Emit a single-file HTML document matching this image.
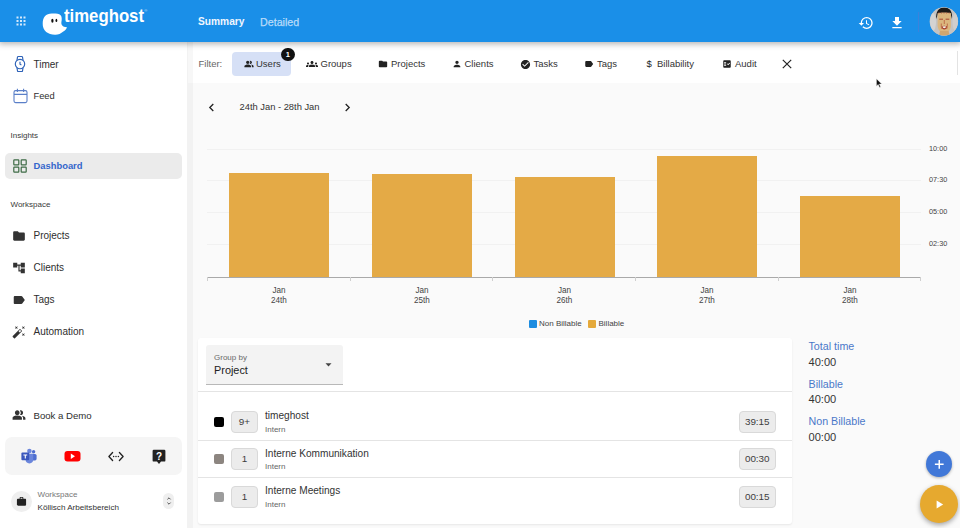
<!DOCTYPE html>
<html>
<head>
<meta charset="utf-8">
<title>timeghost</title>
<style>
*{box-sizing:border-box;margin:0;padding:0}
html,body{width:960px;height:528px;overflow:hidden;background:#fafafa;font-family:"Liberation Sans",sans-serif;color:#2b2b2b}
.abs{position:absolute}
#hdr{position:absolute;left:0;top:0;width:960px;height:42px;background:#1a8fe8;box-shadow:0 1px 6px 1px rgba(0,0,0,.3);z-index:5}
#side{position:absolute;left:0;top:42px;width:187px;height:486px;background:#fff;z-index:2}
#fbar{position:absolute;left:188px;top:42px;width:772px;height:41px;background:#fff;z-index:1}
.t{position:absolute;white-space:nowrap;line-height:1}
.nav{font-size:10px;color:#2e2e2e}
.sec{font-size:8px;color:#3a3a3a}
.chip{font-size:9.5px;color:#333}
.ax{font-size:8.15px;color:#444}
.bar{position:absolute;background:#e4aa46}
.grid{position:absolute;left:207px;width:714px;height:1px;background:#f1f1f1}
.row-t{font-size:10.1px;color:#333}
.row-s{font-size:8px;color:#666}
.badge{position:absolute;background:#ececec;border:1px solid #d9d9d9;border-radius:4px;font-size:9.9px;color:#3e3e3e;text-align:center}
.sq{position:absolute;width:10px;height:10px;border-radius:2px}
.sum-l{font-size:10.7px;color:#4a78c9}
.sum-v{font-size:11.1px;color:#353535}
</style>
</head>
<body>
<!-- HEADER -->
<div id="hdr">
  <svg class="abs" style="left:16px;top:16px" width="10" height="10" viewBox="0 0 10 10" fill="#d6eafb">
    <rect x="0.5" y="0.5" width="2" height="2"/><rect x="4" y="0.5" width="2" height="2"/><rect x="7.5" y="0.5" width="2" height="2"/>
    <rect x="0.5" y="4" width="2" height="2"/><rect x="4" y="4" width="2" height="2"/><rect x="7.5" y="4" width="2" height="2"/>
    <rect x="0.5" y="7.5" width="2" height="2"/><rect x="4" y="7.5" width="2" height="2"/><rect x="7.5" y="7.5" width="2" height="2"/>
  </svg>
  <!-- ghost logo -->
  <svg class="abs" style="left:40px;top:12px" width="30" height="24" viewBox="40 12 30 24">
    <path d="M51.7 13.5 C55.5 13.4 59 13.6 60.6 15.2 C62 16.6 61.9 19.5 61.4 22 C61 24.6 62.5 27.3 67 27.2 C66.5 29 65 30.6 63.3 31.4 C61 33.5 58 34.8 55 34.7 C51.5 34.7 48.3 33.6 46.2 32 C43.800 29.800 42.600 27 42.700 23.800 C42.700 20.500 43.300 18 44.900 16.300 C46.500 14.300 49 13.500 51.700 13.500 Z" fill="#fff"/>
    <ellipse cx="52.4" cy="20.7" rx="1.15" ry="2" fill="#111"/>
    <ellipse cx="56.4" cy="20.4" rx="0.9" ry="1.7" fill="#111"/>
  </svg>
  <div class="t" style="left:64px;top:6.7px;font-size:18.5px;font-weight:bold;color:#fff;transform-origin:0 0;transform:scaleX(0.905)">timeghost</div>
  <div class="t" style="left:144.3px;top:9px;font-size:4px;color:rgba(255,255,255,.75)">®</div>
  <div class="t" style="left:198px;top:16.5px;font-size:10.2px;font-weight:bold;color:#f1f6fe">Summary</div>
  <div class="t" style="left:260px;top:16.5px;font-size:10.7px;color:#b9dbf9;-webkit-text-stroke:0.25px #b9dbf9">Detailed</div>
  <!-- history icon -->
  <svg class="abs" style="left:858px;top:14.5px" width="16" height="16" viewBox="0 0 24 24" fill="#fff">
    <path d="M13 3a9 9 0 0 0-9 9H1l3.89 3.89.07.14L9 12H6c0-3.87 3.13-7 7-7s7 3.13 7 7-3.13 7-7 7c-1.93 0-3.68-.79-4.94-2.06l-1.42 1.42A8.954 8.954 0 0 0 13 21a9 9 0 0 0 0-18zm-1 5v5l4.28 2.54.72-1.21-3.5-2.08V8H12z"/>
  </svg>
  <!-- download icon -->
  <svg class="abs" style="left:889px;top:14.5px" width="16" height="16" viewBox="0 0 24 24" fill="#fff">
    <path d="M19 9h-4V3H9v6H5l7 7 7-7zM5 18v2h14v-2H5z"/>
  </svg>
  <div class="abs" style="left:918px;top:12px;width:1px;height:20px;background:#3a82dc"></div>
  <!-- avatar -->
  <svg class="abs" style="left:929px;top:7px" width="30" height="30" viewBox="929 7 30 30">
    <defs><clipPath id="avc"><circle cx="943.9" cy="21.5" r="14"/></clipPath></defs>
    <circle cx="943.9" cy="21.5" r="14.2" fill="#c6c6c6"/>
    <g clip-path="url(#avc)">
      <rect x="929" y="7" width="30" height="30" fill="#c4c3c2"/>
      <ellipse cx="933" cy="22" rx="3" ry="9" fill="#d4d3d2"/>
      <ellipse cx="955.5" cy="22" rx="3" ry="9" fill="#cfcecd"/>
      <path d="M936.3 19 C935.6 12 938.5 7.6 944.2 7.6 C950 7.600 952.800 12 952 19 L950.600 13.600 H938 Z" fill="#1d1a18"/>
      <path d="M937.600 13.400 C937.600 12.200 950.900 12.200 950.900 13.400 V25.500 C950.900 29.500 948 33 944.300 33 C940.600 33 937.600 29.500 937.600 25.500 Z" fill="#dbb67e"/>
      <path d="M940 31 H948.600 L950 37 H938.600 Z" fill="#cfa66f"/>
      <path d="M939.300 19.200 H943 M945.600 19.200 H949.300" stroke="#a5452e" stroke-width="1"/>
      <path d="M944.300 20 V24 M941.300 23.500 C941.300 26 941 27 942 29 M947.300 23.500 C947.300 26 947.600 27 946.600 29" stroke="#b65a3c" stroke-width="0.800" fill="none"/>
      <path d="M941.600 26.200 Q944.300 25.200 947 26.200 Q946.600 29.400 944.300 29.400 Q942 29.400 941.600 26.200 Z" fill="#a63e2c"/>
      <path d="M942.400 26.600 Q944.300 26 946.200 26.600 Q945.800 28.200 944.300 28.200 Q942.800 28.200 942.400 26.600 Z" fill="#f6f0e6"/>
      <path d="M938.300 13 H950.300" stroke="#a33" stroke-width="0.700" stroke-dasharray="1 1.600"/>
    </g>
  </svg>
</div>

<!-- SIDEBAR -->
<div id="side">
  <!-- coordinates inside are relative to top:42 -->
  <!-- Timer -->
  <svg class="abs" style="left:13px;top:13px" width="14" height="18" viewBox="0 0 14 18" fill="none" stroke="#2f63b8" stroke-width="1.15">
    <circle cx="7" cy="9" r="4.7"/><path d="M4 5.200 L4.500 2.200 Q4.600 1.500 5.300 1.500 H8.700 Q9.400 1.500 9.500 2.200 L10 5.200 M4 12.800 L4.500 15.800 Q4.600 16.500 5.300 16.500 H8.700 Q9.400 16.500 9.500 15.800 L10 12.800 M7 6.800 V9.200 L8.400 10"/>
  </svg>
  <div class="t nav" style="left:33.5px;top:17.5px">Timer</div>
  <!-- Feed -->
  <svg class="abs" style="left:12.5px;top:46px" width="15" height="16" viewBox="0 0 15 16" fill="none" stroke="#5a7fc8" stroke-width="1.1">
    <rect x="1" y="2.6" width="13" height="12" rx="1.6"/><path d="M1 6.4 H14 M4.4 0.8 V4 M10.6 0.8 V4"/>
  </svg>
  <div class="t nav" style="left:33.5px;top:49.5px;font-size:9.3px">Feed</div>

  <div class="t sec" style="left:10.5px;top:89.5px">Insights</div>
  <div class="abs" style="left:5px;top:111px;width:177px;height:26px;border-radius:5px;background:#ebebeb"></div>
  <svg class="abs" style="left:13px;top:117px" width="14" height="14" viewBox="0 0 14 14" fill="none" stroke="#3d6b45" stroke-width="1.2">
    <rect x="0.8" y="0.8" width="5" height="5" rx="0.6"/><rect x="8.2" y="0.8" width="5" height="5" rx="0.6"/><rect x="0.8" y="8.2" width="5" height="5" rx="0.6"/><rect x="8.2" y="8.2" width="5" height="5" rx="0.6"/>
  </svg>
  <div class="t" style="left:33.5px;top:119px;font-size:9.4px;font-weight:bold;color:#3366cc">Dashboard</div>

  <div class="t sec" style="left:10.5px;top:159px">Workspace</div>
  <!-- Projects -->
  <svg class="abs" style="left:12px;top:187px" width="14" height="14" viewBox="0 0 24 24" fill="#333"><path d="M10 4H4c-1.1 0-2 .9-2 2v12c0 1.1.9 2 2 2h16c1.1 0 2-.9 2-2V8c0-1.1-.9-2-2-2h-8l-2-2z"/></svg>
  <div class="t nav" style="left:33.5px;top:188.5px">Projects</div>
  <!-- Clients -->
  <svg class="abs" style="left:12px;top:219px" width="14" height="14" viewBox="0 0 24 24" fill="#333"><path d="M22 11V3h-7v3H9V3H2v8h7V8h2v10h4v3h7v-8h-7v3h-2V8h2v3z"/></svg>
  <div class="t nav" style="left:33.5px;top:220.5px">Clients</div>
  <!-- Tags -->
  <svg class="abs" style="left:12px;top:251px" width="14" height="14" viewBox="0 0 24 24" fill="#333"><path d="M17.63 5.84C17.27 5.33 16.67 5 16 5L5 5.01C3.9 5.01 3 5.9 3 7v10c0 1.1.9 1.99 2 1.99L16 19c.67 0 1.27-.33 1.63-.84L22 12l-4.37-6.16z"/></svg>
  <div class="t nav" style="left:33.5px;top:252.5px">Tags</div>
  <!-- Automation -->
  <svg class="abs" style="left:12px;top:283px" width="14" height="14" viewBox="0 0 24 24" fill="#333"><path d="M7.5 5.6L10 7 8.6 4.5 10 2 7.500 3.400 5 2l1.400 2.500L5 7zm12 9.800L17 14l1.400 2.500L17 19l2.500-1.400L22 19l-1.400-2.500L22 14zM22 2l-2.500 1.400L17 2l1.400 2.500L17 7l2.500-1.400L22 7l-1.400-2.500zm-7.630 5.290a.9959.996 0 0 0-1.410 0L1.290 18.960c-.39.39-.39 1.020 0 1.410l2.340 2.340c.39.39 1.020.39 1.410 0L16.700 11.050c.39-.39.39-1.020 0-1.410l-2.330-2.350zm-1.030 5.490l-2.120-2.120 2.440-2.440 2.120 2.120-2.440 2.440z"/></svg>
  <div class="t nav" style="left:33.5px;top:284.5px">Automation</div>

  <!-- Book a demo -->
  <svg class="abs" style="left:12px;top:366px" width="14" height="14" viewBox="0 0 24 24" fill="#333"><path d="M16.670 13.130C18.040 14.060 19 15.320 19 17v3h4v-3c0-2.180-3.570-3.470-6.330-3.870zM9 12c2.210 0 4-1.790 4-4s-1.790-4-4-4-4 1.790-4 4 1.790 4 4 4zm6 0c2.210 0 4-1.790 4-4s-1.790-4-4-4c-.47 0-.91.100-1.330.24a5.980 5.980 0 0 1 0 7.520c.42.140.86.240 1.330.240zm-6 1c-2.670 0-8 1.340-8 4v3h16v-3c0-2.660-5.330-4-8-4z"/></svg>
  <div class="t nav" style="left:33.5px;top:368.5px;font-size:9.6px">Book a Demo</div>

  <!-- Icon box -->
  <div class="abs" style="left:5px;top:395px;width:177px;height:38px;border-radius:7px;background:#f5f5f5"></div>
  <!-- Teams -->
  <svg class="abs" style="left:20.5px;top:406px" width="16" height="16" viewBox="0 0 16 16">
    <circle cx="12.6" cy="3.8" r="1.7" fill="#4f6fd0"/><rect x="9.6" y="6" width="6" height="6.4" rx="1.6" fill="#4f6fd0"/>
    <circle cx="8.4" cy="3" r="2.3" fill="#6b86dc"/><path d="M4.6 5.800 H12.200 V11.600 A3.800 3.800 0 0 1 4.600 11.600 Z" fill="#6b86dc"/>
    <rect x="0.4" y="4.400" width="7.8" height="7.800" rx="1" fill="#3a57bd"/>
    <path d="M2.400 6.400 H6.200 V7.400 H4.850 V10.600 H3.750 V7.400 H2.400 Z" fill="#fff"/>
  </svg>
  <!-- YouTube -->
  <svg class="abs" style="left:63.5px;top:407px" width="17" height="14" viewBox="0 0 17 14"><rect x="0.5" y="2" width="16" height="10.500" rx="3" fill="#f00"/><path d="M6.800 4.600 L11 7.250 L6.800 9.900 Z" fill="#fff"/></svg>
  <!-- <..> -->
  <svg class="abs" style="left:107.500px;top:407.500px" width="16" height="13" viewBox="0 0 16 13" fill="none" stroke="#222" stroke-width="1.300" stroke-linecap="round" stroke-linejoin="round"><path d="M4.600 2.500 L0.900 6.500 L4.600 10.500 M11.400 2.500 L15.100 6.500 L11.400 10.500"/><path d="M5.600 6.500 h0.010 M8 6.500 h0.010 M10.400 6.500 h0.010" stroke-width="1.500"/></svg>
  <!-- ? -->
  <svg class="abs" style="left:152px;top:406.700px" width="14" height="16" viewBox="0 0 14 16"><path d="M1.800 0.800 H12.200 A1.200 1.200 0 0 1 13.400 2 V11.400 A1.200 1.200 0 0 1 12.200 12.600 H9 L7 15 L5 12.600 H1.800 A1.200 1.200 0 0 1 0.600 11.400 V2 A1.200 1.200 0 0 1 1.800 0.800 Z" fill="#222"/><text x="7" y="10.600" font-family="Liberation Sans" font-size="10" font-weight="bold" fill="#fff" text-anchor="middle">?</text></svg>

  <!-- Workspace switcher -->
  <div class="abs" style="left:11px;top:449px;width:21px;height:21px;border-radius:50%;background:#efefef"></div>
  <svg class="abs" style="left:16px;top:454px" width="11" height="11" viewBox="0 0 24 24" fill="#222"><path d="M20 6h-4V4c0-1.110-.89-2-2-2h-4c-1.110 0-2 .89-2 2v2H4c-1.110 0-1.990.89-1.990 2L2 19c0 1.110.89 2 2 2h16c1.110 0 2-.89 2-2V8c0-1.110-.89-2-2-2zm-6 0h-4V4h4v2z"/></svg>
  <div class="t" style="left:37.500px;top:448.500px;font-size:8px;color:#777">Workspace</div>
  <div class="t" style="left:37.500px;top:461.500px;font-size:8.100px;color:#333">Köllisch Arbeitsbereich</div>
  <div class="abs" style="left:163px;top:451px;width:11px;height:16px;border-radius:5.500px;background:#efefef"></div>
  <svg class="abs" style="left:165.500px;top:454px" width="6" height="10" viewBox="0 0 6 10" fill="none" stroke="#444" stroke-width="0.900"><path d="M1.400 3.400 L3 1.800 L4.600 3.400 M1.400 6.600 L3 8.200 L4.600 6.600"/></svg>
</div>

<div class="abs" style="left:187px;top:42px;width:6px;height:486px;background:rgba(0,0,0,0.03);z-index:2"></div>
<!-- FILTER BAR -->
<div id="fbar">
  <div class="t chip" style="margin-top:-0.5px;left:10.500px;top:17.500px;color:#666">Filter:</div>
  <div class="abs" style="left:44.200px;top:9.800px;width:58.400px;height:24.200px;border-radius:4px;background:#d6e0f6"></div>
  <svg class="abs" style="margin-top:-0.5px;left:55.500px;top:17.500px" width="10" height="10" viewBox="0 0 24 24" fill="#222"><path d="M16.670 13.130C18.040 14.060 19 15.320 19 17v3h4v-3c0-2.180-3.570-3.470-6.330-3.870zM9 12c2.210 0 4-1.790 4-4s-1.790-4-4-4-4 1.790-4 4 1.790 4 4 4zm6 0c2.210 0 4-1.790 4-4s-1.790-4-4-4c-.47 0-.91.100-1.330.24a5.980 5.980 0 0 1 0 7.520c.42.140.86.240 1.330.240zm-6 1c-2.670 0-8 1.340-8 4v3h16v-3c0-2.660-5.330-4-8-4z"/></svg>
  <div class="t chip" style="margin-top:-0.5px;left:68px;top:17.500px">Users</div>
  <div class="abs" style="left:93px;top:5.500px;width:13.500px;height:13.500px;border-radius:50%;background:#111;color:#fff;font-size:7.500px;font-weight:bold;text-align:center;line-height:13.500px">1</div>

  <svg class="abs" style="margin-top:-0.5px;left:118px;top:16.500px" width="12" height="12" viewBox="0 0 24 24" fill="#222"><path d="M12 12.750c1.630 0 3.070.39 4.240.9 1.080.48 1.760 1.560 1.760 2.730V18H6v-1.610c0-1.180.68-2.260 1.760-2.730 1.170-.52 2.610-.91 4.240-.91zM4 13c1.100 0 2-.9 2-2s-.9-2-2-2-2 .9-2 2 .9 2 2 2zm1.130 1.100c-.37-.06-.74-.1-1.130-.1-.99 0-1.930.21-2.780.58C.48 14.900 0 15.620 0 16.430V18h4.500v-1.610c0-.83.23-1.610.63-2.290zM20 13c1.100 0 2-.9 2-2s-.9-2-2-2-2 .9-2 2 .9 2 2 2zm4 3.430c0-.81-.48-1.530-1.220-1.850-.85-.37-1.790-.58-2.780-.58-.39 0-.76.040-1.130.1.400.68.630 1.460.63 2.290V18H24v-1.570zM12 6c1.660 0 3 1.340 3 3s-1.340 3-3 3-3-1.340-3-3 1.340-3 3-3z"/></svg>
  <div class="t chip" style="margin-top:-0.5px;left:132.500px;top:17.500px">Groups</div>

  <svg class="abs" style="margin-top:-0.5px;left:189.500px;top:17.500px" width="10" height="10" viewBox="0 0 24 24" fill="#222"><path d="M10 4H4c-1.100 0-2 .9-2 2v12c0 1.100.9 2 2 2h16c1.100 0 2-.9 2-2V8c0-1.100-.9-2-2-2h-8l-2-2z"/></svg>
  <div class="t chip" style="margin-top:-0.5px;left:203px;top:17.500px">Projects</div>

  <svg class="abs" style="margin-top:-0.5px;left:263.500px;top:17.500px" width="10" height="10" viewBox="0 0 24 24" fill="#222"><path d="M12 12c2.210 0 4-1.790 4-4s-1.790-4-4-4-4 1.790-4 4 1.790 4 4 4zm0 2c-2.670 0-8 1.340-8 4v2h16v-2c0-2.660-5.330-4-8-4z"/></svg>
  <div class="t chip" style="margin-top:-0.5px;left:276.500px;top:17.500px">Clients</div>

  <svg class="abs" style="margin-top:-0.5px;left:331.500px;top:17px" width="11" height="11" viewBox="0 0 24 24" fill="#222"><path d="M12 2C6.480 2 2 6.480 2 12s4.480 10 10 10 10-4.480 10-10S17.520 2 12 2zm-2 15l-5-5 1.410-1.410L10 14.170l7.590-7.590L19 8l-9 9z"/></svg>
  <div class="t chip" style="margin-top:-0.5px;left:345.500px;top:17.500px">Tasks</div>

  <svg class="abs" style="margin-top:-0.5px;left:395.500px;top:17.500px" width="10" height="10" viewBox="0 0 24 24" fill="#222"><path d="M17.630 5.840C17.270 5.330 16.670 5 16 5L5 5.010C3.900 5.010 3 5.900 3 7v10c0 1.100.9 1.990 2 1.990L16 19c.67 0 1.270-.33 1.630-.84L22 12l-4.370-6.160z"/></svg>
  <div class="t chip" style="margin-top:-0.5px;left:409px;top:17.500px">Tags</div>

  <div class="t chip" style="margin-top:-0.5px;left:458.500px;top:17.500px;color:#222">$</div>
  <div class="t chip" style="margin-top:-0.5px;left:469px;top:17.500px">Billability</div>

  <svg class="abs" style="margin-top:-0.5px;left:534px;top:17.500px" width="10" height="10" viewBox="0 0 24 24" fill="#222"><path fill-rule="evenodd" d="M19 3H5c-1.100 0-2 .9-2 2v14c0 1.100.9 2 2 2h14c1.100 0 2-.9 2-2V5c0-1.100-.9-2-2-2zM10 17H5v-2h5v2zm0-4H5v-2h5v2zm0-4H5V7h5v2zm4.820 6L12 12.160l1.410-1.410 1.410 1.420L17.990 9l1.420 1.420L14.820 15z"/></svg>
  <div class="t chip" style="margin-top:-0.5px;left:547px;top:17.500px">Audit</div>

  <svg class="abs" style="margin-top:-0.5px;left:594px;top:17.500px" width="10" height="10" viewBox="0 0 10 10" stroke="#222" stroke-width="1.200" fill="none"><path d="M0.800 0.800 L9.200 9.200 M9.200 0.800 L0.800 9.200"/></svg>
  <div class="abs" style="left:769.3px;top:9px;width:1px;height:24px;background:#e3e3e3"></div>
</div>

<!-- cursor -->
<svg class="abs" style="left:875.500px;top:77.500px;z-index:9" width="6.300" height="10.800" viewBox="0 0 8 13"><path d="M0.500 0.500 V10 L2.800 7.900 L4.500 11.800 L6 11.100 L4.300 7.400 H7.400 Z" fill="#111" stroke="#fff" stroke-width="0.600"/></svg>

<!-- DATE NAV -->
<svg class="abs" style="left:208px;top:103px" width="7" height="9" viewBox="0 0 7 9" fill="none" stroke="#222" stroke-width="1.300"><path d="M5.300 1 L1.800 4.500 L5.300 8"/></svg>
<div class="t" style="left:239.500px;top:103.2px;font-size:9.35px;color:#333">24th Jan - 28th Jan</div>
<svg class="abs" style="left:344px;top:103px" width="7" height="9" viewBox="0 0 7 9" fill="none" stroke="#222" stroke-width="1.300"><path d="M1.700 1 L5.200 4.500 L1.700 8"/></svg>

<!-- CHART -->
<div class="grid" style="top:148.5px"></div>
<div class="grid" style="top:180.200px"></div>
<div class="grid" style="top:211.900px"></div>
<div class="grid" style="top:243.600px"></div>
<div class="bar" style="left:229px;top:173px;width:99.5px;height:104px"></div>
<div class="bar" style="left:372px;top:174px;width:99.5px;height:103px"></div>
<div class="bar" style="left:514.500px;top:176.500px;width:100px;height:100.500px"></div>
<div class="bar" style="left:657px;top:156px;width:100px;height:121px"></div>
<div class="bar" style="left:800px;top:196px;width:100px;height:81px"></div>
<div class="abs" style="left:207px;top:276.500px;width:714px;height:1.500px;background:#a9a9a9"></div>
<div class="abs" style="left:207px;top:277px;width:1px;height:4px;background:#cfcfcf"></div>
<div class="abs" style="left:350px;top:277px;width:1px;height:4px;background:#cfcfcf"></div>
<div class="abs" style="left:492px;top:277px;width:1px;height:4px;background:#cfcfcf"></div>
<div class="abs" style="left:635px;top:277px;width:1px;height:4px;background:#cfcfcf"></div>
<div class="abs" style="left:778px;top:277px;width:1px;height:4px;background:#cfcfcf"></div>
<div class="abs" style="left:920px;top:277px;width:1px;height:4px;background:#cfcfcf"></div>

<div class="t ax" style="left:229px;width:100px;text-align:center;top:287.1px">Jan</div>
<div class="t ax" style="left:229px;width:100px;text-align:center;top:297.3px">24th</div>
<div class="t ax" style="left:372px;width:100px;text-align:center;top:287.1px">Jan</div>
<div class="t ax" style="left:372px;width:100px;text-align:center;top:297.3px">25th</div>
<div class="t ax" style="left:514.500px;width:100px;text-align:center;top:287.1px">Jan</div>
<div class="t ax" style="left:514.500px;width:100px;text-align:center;top:297.3px">26th</div>
<div class="t ax" style="left:657px;width:100px;text-align:center;top:287.1px">Jan</div>
<div class="t ax" style="left:657px;width:100px;text-align:center;top:297.3px">27th</div>
<div class="t ax" style="left:800px;width:100px;text-align:center;top:287.1px">Jan</div>
<div class="t ax" style="left:800px;width:100px;text-align:center;top:297.3px">28th</div>

<div class="t ax" style="left:929px;top:145.3px;font-size:7.3px">10:00</div>
<div class="t ax" style="left:929px;top:176.200px;font-size:7.3px">07:30</div>
<div class="t ax" style="left:929px;top:208.400px;font-size:7.3px">05:00</div>
<div class="t ax" style="left:929px;top:240px;font-size:7.3px">02:30</div>

<div class="abs" style="left:529px;top:320px;width:8px;height:8px;background:#1e8de0;border-radius:1px"></div>
<div class="t ax" style="left:539px;top:320px;font-size:8px">Non Billable</div>
<div class="abs" style="left:588px;top:320px;width:8px;height:8px;background:#e5a93a;border-radius:1px"></div>
<div class="t ax" style="left:598.500px;top:320px;font-size:8px">Billable</div>

<!-- CARD -->
<div class="abs" style="left:198px;top:338px;width:593.700px;height:185.500px;background:#fff;border-radius:3px;box-shadow:0 1px 2px rgba(0,0,0,.08)"></div>
<div class="abs" style="left:206px;top:345px;width:136.500px;height:39.500px;background:#f3f3f3;border-bottom:1.5px solid #b8b8b8;border-radius:3px 3px 0 0"></div>
<div class="t" style="left:214px;top:353.500px;font-size:8px;color:#6a6a6a">Group by</div>
<div class="t" style="left:214px;top:364.500px;font-size:10.900px;color:#222">Project</div>
<svg class="abs" style="left:325px;top:362.500px" width="7" height="4" viewBox="0 0 7 4"><path d="M0.500 0.300 H6.500 L3.500 3.500 Z" fill="#444"/></svg>
<div class="abs" style="left:198px;top:391px;width:593.700px;height:1px;background:#e4e4e4"></div>

<!-- rows -->
<div class="sq" style="left:214px;top:416.500px;background:#000"></div>
<div class="badge" style="left:231px;top:410.500px;width:27px;height:22px;line-height:20.500px">9+</div>
<div class="t row-t" style="left:265px;top:411px">timeghost</div>
<div class="t row-s" style="left:265px;top:425.800px">Intern</div>
<div class="badge" style="left:739px;top:410.500px;width:36.500px;height:22px;line-height:20.500px">39:15</div>
<div class="abs" style="left:198px;top:439.500px;width:593.700px;height:1px;background:#e4e4e4"></div>

<div class="sq" style="left:214px;top:454px;background:#8c8580"></div>
<div class="badge" style="left:231px;top:448px;width:27px;height:22px;line-height:20.500px">1</div>
<div class="t row-t" style="left:265px;top:448.500px">Interne Kommunikation</div>
<div class="t row-s" style="left:265px;top:463.300px">Intern</div>
<div class="badge" style="left:739px;top:448px;width:36.500px;height:22px;line-height:20.500px">00:30</div>
<div class="abs" style="left:198px;top:477px;width:593.700px;height:1px;background:#e4e4e4"></div>

<div class="sq" style="left:214px;top:491.500px;background:#9c9c9c"></div>
<div class="badge" style="left:231px;top:485.500px;width:27px;height:22px;line-height:20.500px">1</div>
<div class="t row-t" style="left:265px;top:486px">Interne Meetings</div>
<div class="t row-s" style="left:265px;top:500.800px">Intern</div>
<div class="badge" style="left:739px;top:485.500px;width:36.500px;height:22px;line-height:20.500px">00:15</div>

<!-- SUMMARY -->
<div class="t sum-l" style="left:808.500px;top:341px">Total time</div>
<div class="t sum-v" style="left:808.500px;top:356.500px">40:00</div>
<div class="t sum-l" style="left:808.500px;top:378.500px">Billable</div>
<div class="t sum-v" style="left:808.500px;top:394px">40:00</div>
<div class="t sum-l" style="left:808.500px;top:416px">Non Billable</div>
<div class="t sum-v" style="left:808.500px;top:431.500px">00:00</div>

<!-- FABs -->
<div class="abs" style="left:925.700px;top:450.500px;width:26.500px;height:26.500px;border-radius:50%;background:#4178d8;box-shadow:0 1px 3px rgba(0,0,0,.3)"></div>
<svg class="abs" style="left:934px;top:459px" width="10.500" height="10.500" viewBox="0 0 12 12" stroke="#fff" stroke-width="1.700" fill="none"><path d="M6 1 V11 M1 6 H11"/></svg>
<div class="abs" style="left:920px;top:485px;width:38px;height:38px;border-radius:50%;background:#e6a92f;box-shadow:0 2px 5px rgba(0,0,0,.35)"></div>
<svg class="abs" style="left:936px;top:500.200px" width="7.800" height="9" viewBox="0 0 9 11"><path d="M0.500 0.500 L8.500 5.500 L0.500 10.500 Z" fill="#fff"/></svg>

</body>
</html>
